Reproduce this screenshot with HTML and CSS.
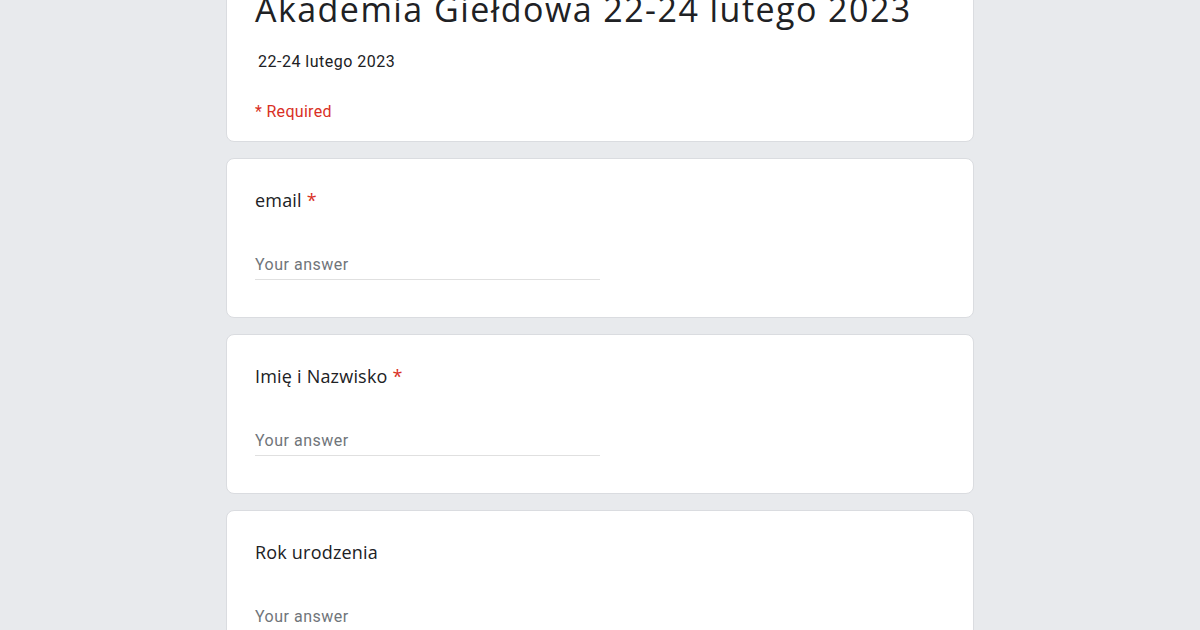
FILE: index.html
```html
<!DOCTYPE html>
<html lang="pl">
<head>
<meta charset="utf-8">
<title>Akademia Giełdowa 22-24 lutego 2023</title>
<link rel="stylesheet" href="styles.css">
</head>
<body>
<main class="form">
  <section class="card header">
    <h1 class="title">Akademia Giełdowa 22-24 lutego 2023</h1>
    <p class="desc">22-24 lutego 2023</p>
    <p class="req">* Required</p>
  </section>
  <section class="card question">
    <div class="label">email <span class="star">*</span></div>
    <div class="answer">Your answer</div>
  </section>
  <section class="card question">
    <div class="label">Imię i Nazwisko <span class="star">*</span></div>
    <div class="answer">Your answer</div>
  </section>
  <section class="card question">
    <div class="label">Rok urodzenia</div>
    <div class="answer">Your answer</div>
  </section>
</main>
</body>
</html>
```
FILE: styles.css
```css
html, body {
  margin: 0;
  padding: 0;
  background: #e8eaed;
  overflow: hidden;
}
body {
  font-family: Roboto, "Liberation Sans", sans-serif;
  color: #202124;
}
.form {
  width: 748px;
  margin: -20px auto 0;
  display: flex;
  flex-direction: column;
  gap: 16px;
}
.card {
  background: #fff;
  border: 1px solid #dadce0;
  border-radius: 8px;
  box-sizing: border-box;
  padding: 0 28px;
}
.header {
  padding-top: 8px;
  padding-bottom: 19px;
}
.title {
  margin: 0;
  font-family: "Open Sans", sans-serif;
  font-weight: 400;
  font-size: 34px;
  line-height: 40px;
  letter-spacing: 1.45px;
  color: #202124;
  white-space: nowrap;
}
.desc {
  margin: 23px 0 0 3px;
  font-size: 16px;
  line-height: 20px;
  letter-spacing: 0.5px;
}
.req {
  margin: 30px 0 0;
  font-size: 16px;
  line-height: 20px;
  letter-spacing: 0.3px;
  color: #d93025;
}
.question {
  height: 160px;
  padding-top: 29px;
}
.label {
  font-family: "Open Sans", sans-serif;
  font-size: 18px;
  line-height: 24px;
  letter-spacing: 0.2px;
  color: #202124;
}
.star {
  color: #d93025;
}
.answer {
  width: 345px;
  margin-top: 43px;
  font-size: 16px;
  line-height: 20px;
  letter-spacing: 0.5px;
  color: #70757a;
  border-bottom: 1px solid #e0e0e0;
  padding-bottom: 4px;
}
```
